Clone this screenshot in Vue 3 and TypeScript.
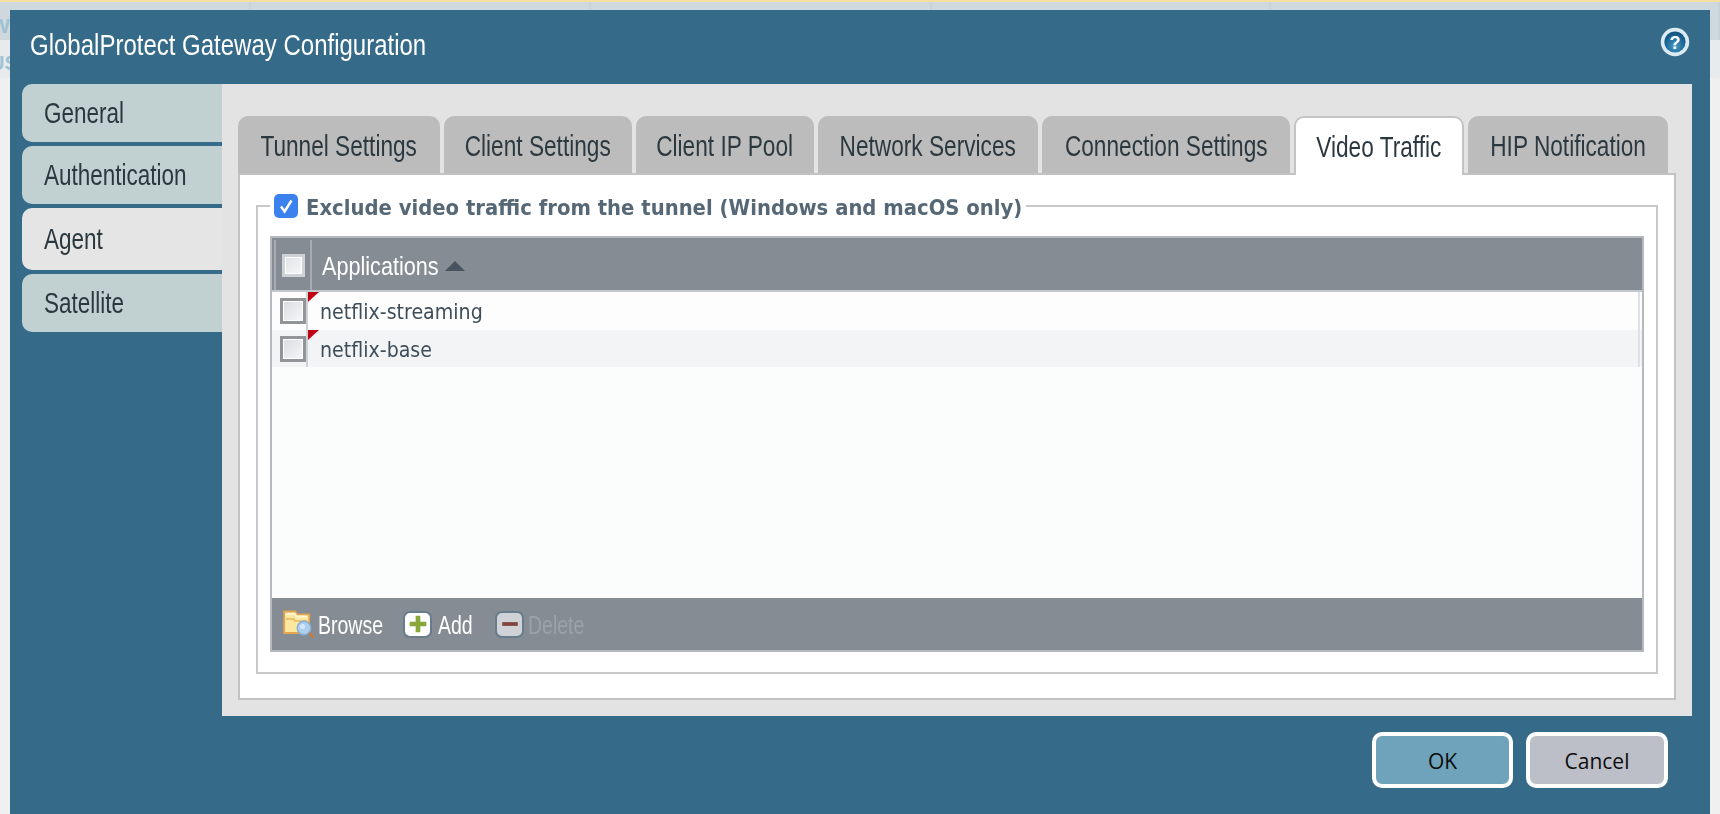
<script setup lang="ts">
const navItems = [
  { label: 'General', active: false },
  { label: 'Authentication', active: false },
  { label: 'Agent', active: true },
  { label: 'Satellite', active: false },
]
const tabs = [
  { label: 'Tunnel Settings', width: 202, active: false },
  { label: 'Client Settings', width: 188, active: false },
  { label: 'Client IP Pool', width: 178, active: false },
  { label: 'Network Services', width: 220, active: false },
  { label: 'Connection Settings', width: 248, active: false },
  { label: 'Video Traffic', width: 170, active: true },
  { label: 'HIP Notification', width: 200, active: false },
]
const rows = ['netflix-streaming', 'netflix-base']
const stripCols = [251, 340, 341, 339, 449]
</script>

<template>
  <div class="page">
    <div class="stripe"></div>
    <div class="bg-head">
      <div v-for="(w, i) in stripCols" :key="i" class="bg-col" :style="{ width: w + 'px' }">
        <span v-if="i === 0" class="frag frag-w">W</span>
      </div>
    </div>
    <div class="bg-sub"><span class="frag frag-is">US</span></div>

    <section class="dialog">
      <header class="titlebar">
        <h1 class="title"><span class="narrow">GlobalProtect Gateway Configuration</span></h1>
        <svg class="help" viewBox="0 0 30 30" width="30" height="30" aria-label="Help">
          <defs>
            <radialGradient id="helpFill" cx="50%" cy="70%" r="62%">
              <stop offset="0" stop-color="#4c9ac6" />
              <stop offset="0.65" stop-color="#1f6c9c" />
              <stop offset="1" stop-color="#125680" />
            </radialGradient>
            <filter id="helpSoft" x="-10%" y="-10%" width="120%" height="120%">
              <feGaussianBlur stdDeviation="0.7" />
            </filter>
          </defs>
          <g filter="url(#helpSoft)">
            <circle cx="15" cy="15" r="14.2" fill="#dcebf2" />
            <circle cx="15" cy="15" r="10.6" fill="url(#helpFill)" />
          </g>
          <text x="15" y="21.5" text-anchor="middle" class="help-q">?</text>
        </svg>
      </header>

      <div class="body">
        <nav class="side">
          <div v-for="item in navItems" :key="item.label" class="side-item" :class="{ on: item.active }">
            <span class="narrow">{{ item.label }}</span>
          </div>
        </nav>

        <main class="panel">
          <div class="tabs">
            <div
              v-for="t in tabs"
              :key="t.label"
              class="tab"
              :class="{ on: t.active }"
              :style="{ width: t.width + 'px' }"
            >
              <span class="narrow center">{{ t.label }}</span>
            </div>
          </div>

          <div class="box">
            <fieldset class="group">
              <legend class="legend">
                <span class="blue-check">
                  <svg viewBox="0 0 24 24" width="24" height="24">
                    <path d="M7 12.5l3.6 5L17.5 6.5" fill="none" stroke="#fff" stroke-width="2.4" />
                  </svg>
                </span>
                <span class="legend-text"><span class="squeeze">Exclude video traffic from the tunnel (Windows and macOS only)</span></span>
              </legend>

              <div class="grid">
                <div class="grid-head">
                  <div class="head-check"><span class="cb head"></span></div>
                  <div class="head-label">
                    <span class="narrow">Applications</span>
                    <span class="sort"></span>
                  </div>
                </div>

                <div class="grid-body">
                  <div v-for="r in rows" :key="r" class="row">
                    <div class="row-check"><span class="cb"></span></div>
                    <div class="row-label">
                      <span class="flag"></span>
                      <span class="squeeze cell">{{ r }}</span>
                    </div>
                  </div>
                </div>

                <div class="toolbar">
                  <div class="tool tool-browse">
                    <svg viewBox="0 0 32 28" width="32" height="28">
                      <defs>
                        <filter id="iconSoft" x="-10%" y="-10%" width="120%" height="120%">
                          <feGaussianBlur stdDeviation="0.45" />
                        </filter>
                      </defs>
                      <g filter="url(#iconSoft)">
                        <path d="M1.2 1.5h11l2 3h12v18.5H1.2z" fill="#fbe7a0" stroke="#e5a550" stroke-width="1.8" />
                        <path d="M3 4h9l1.5 2.5H24" fill="none" stroke="#fff6d4" stroke-width="1.8" />
                        <path d="M3 9h8l1 2h12" fill="none" stroke="#eab75f" stroke-width="1.6" />
                        <circle cx="21" cy="18" r="6.8" fill="#aecff0" stroke="#86aed6" stroke-width="1.4" />
                        <circle cx="19.5" cy="16.5" r="2.6" fill="#d4e6f8" />
                        <path d="M26 23l5 4.5" stroke="#c87a3c" stroke-width="2.2" />
                      </g>
                    </svg>
                    <span class="narrow">Browse</span>
                  </div>
                  <div class="tool tool-add">
                    <span class="sq">
                      <svg viewBox="0 0 18 18" width="20" height="20">
                        <path d="M9 1.5v15M1.5 9h15" stroke="#8aa83a" stroke-width="4.2" />
                      </svg>
                    </span>
                    <span class="narrow">Add</span>
                  </div>
                  <div class="tool tool-del">
                    <span class="sq off">
                      <svg viewBox="0 0 18 18" width="20" height="20">
                        <path d="M2 9h14" stroke="#83463c" stroke-width="3.4" />
                      </svg>
                    </span>
                    <span class="narrow dim">Delete</span>
                  </div>
                </div>
              </div>
            </fieldset>
          </div>
        </main>
      </div>

      <footer class="foot">
        <button class="btn ok" type="button">OK</button>
        <button class="btn cancel" type="button">Cancel</button>
      </footer>
    </section>
  </div>
</template>

<style scoped>
.page {
  position: relative;
  width: 1720px;
  height: 814px;
  overflow: hidden;
  background: #f0f0f0;
  font-family: "Liberation Sans", Arial, sans-serif;
}
.stripe { height: 2px; background: #f5dfa2; }
.bg-head { display: flex; height: 38px; background: #cfd9dd; }
.bg-col { border-right: 2px solid #c7d2da; box-sizing: border-box; overflow: hidden; }
.bg-sub { height: 38px; background: #e8ebee; overflow: hidden; }
.frag {
  display: block;
  color: #a0c2d4;
  font-weight: 700;
  font-size: 20px;
  line-height: 20px;
  white-space: nowrap;
}
.frag-w { margin: 14px 0 0 -9px; }
.frag-is { margin: 13px 0 0 -10px; }

.dialog {
  position: absolute;
  left: 10px;
  top: 10px;
  width: 1700px;
  height: 804px;
  background: #356a89;
  display: flex;
  flex-direction: column;
}
.titlebar {
  height: 74px;
  display: flex;
  justify-content: space-between;
  align-items: flex-start;
  padding: 0 20px 0 20px;
  box-sizing: border-box;
}
.title {
  margin: 10px 0 0;
  font-size: 30px;
  line-height: 50px;
  font-weight: 400;
  color: #fff;
  white-space: nowrap;
}
.narrow {
  display: inline-block;
  transform: scaleX(0.75);
  transform-origin: left center;
  white-space: nowrap;
}
.title .narrow { transform: scaleX(0.8); }
.narrow.center { transform-origin: center; }
.help { margin-top: 17px; flex: none; }
.help-q {
  font-family: "Liberation Sans", Arial, sans-serif;
  font-size: 18px;
  font-weight: 700;
  fill: #fff;
}
.body { display: flex; height: 632px; padding-left: 12px; }
.side {
  width: 200px;
  display: flex;
  flex-direction: column;
  gap: 4px;
}
.side-item {
  height: 58px;
  display: flex;
  align-items: center;
  padding-left: 22px;
  background: #c1d0d1;
  border-radius: 10px 0 0 10px;
  color: #2c3840;
  font-size: 30px;
}
.side-item.on { height: 62px; background: #e5e5e5; }
.panel {
  width: 1470px;
  background: #e3e3e3;
  padding: 32px 0 0 16px;
  box-sizing: border-box;
}
.tabs { display: flex; gap: 4px; height: 57px; }
.tab {
  height: 57px;
  display: flex;
  align-items: center;
  justify-content: center;
  padding-top: 2px;
  background: #bcbcbc;
  border-radius: 10px 10px 0 0;
  color: #2c3840;
  font-size: 30px;
  box-sizing: border-box;
}
.tab .narrow { transform: scaleX(0.755); }
.tab.on {
  position: relative;
  height: 59px;
  padding-top: 0;
  background: #fff;
  border: 2px solid #c3c3c3;
  border-bottom: none;
  z-index: 1;
}
.box {
  width: 1438px;
  height: 527px;
  background: #fff;
  border: 2px solid #c2c2c2;
  padding: 19px 16px 0;
  box-sizing: border-box;
}
.group {
  margin: 0;
  padding: 0 12px 20px;
  border: 2px solid #c8c8c8;
  min-width: 0;
}
.legend {
  padding: 0 4px;
  height: 24px;
  display: flex;
  align-items: center;
}
.blue-check {
  width: 24px;
  height: 24px;
  background: #3b82ee;
  border-radius: 5px;
  flex: none;
}
.blue-check svg { display: block; }
.legend-text {
  margin-left: 8px;
  width: 716px;
  height: 24px;
  line-height: 28px;
  font-family: "DejaVu Sans", Verdana, sans-serif;
  font-weight: 700;
  font-size: 22px;
  color: #566876;
}
.squeeze {
  display: inline-block;
  white-space: nowrap;
  transform: scaleX(0.893);
  transform-origin: left center;
}
.grid {
  margin-top: 18px;
  height: 416px;
  border: 2px solid #b5bac1;
  box-sizing: border-box;
  display: flex;
  flex-direction: column;
  background: #fbfdfd;
}
.grid-head {
  height: 54px;
  background: #858c94;
  border-bottom: 2px solid #c3c8cf;
  display: flex;
  box-sizing: border-box;
  padding: 2px 0 0;
  flex: none;
}
.head-check {
  margin-left: 2px;
  width: 34px;
  border-left: 2px solid #a6acb3;
  border-right: 2px solid #a6acb3;
  box-sizing: content-box;
  display: flex;
  align-items: center;
  justify-content: center;
  height: 50px;
}
.head-label {
  display: flex;
  align-items: center;
  padding-left: 10px;
  color: #fff;
  font-size: 25px;
  height: 46px;
  margin-top: 3px;
}
.head-label .narrow { width: 123px; transform: scaleX(0.865); }
.sort {
  width: 0;
  height: 0;
  border-left: 10px solid transparent;
  border-right: 10px solid transparent;
  border-bottom: 10px solid #47545f;
}
.cb {
  display: block;
  width: 26px;
  height: 26px;
  box-sizing: border-box;
  border: 3px solid #929598;
  background: linear-gradient(135deg, #d9dce4, #f7f7f8);
  box-shadow: inset 0 0 0 1px #fff;
}
.cb.head {
  width: 23px;
  height: 23px;
  border: 3px solid #cfd2d6;
  background: linear-gradient(135deg, #dfe2e6, #f8f8f8);
}
.grid-body { flex: 1; display: flex; flex-direction: column; }
.row { height: 38px; display: flex; flex: none; background: #fdfdfd; }
.row + .row { height: 37px; background: #f3f4f6; }
.row-check {
  flex: none;
  border-right: 2px solid #cdd2d6;
  display: flex;
  align-items: center;
  padding-left: 8px;
  box-sizing: content-box;
  width: 26px;
}
.row-label {
  flex: 1;
  position: relative;
  display: flex;
  align-items: center;
  padding-left: 12px;
  margin-right: 2px;
  border-right: 2px solid #dfe2e5;
  font-family: "DejaVu Sans", Verdana, sans-serif;
  font-size: 22px;
  line-height: 30px;
  color: #3f4d58;
}
.squeeze.cell { transform: scaleX(0.865); margin-top: 2px; }
.flag {
  position: absolute;
  left: 0;
  top: 0;
  width: 0;
  height: 0;
  border-top: 10px solid #c00012;
  border-right: 11px solid transparent;
}
.toolbar {
  height: 52px;
  flex: none;
  background: #858c94;
  display: flex;
  align-items: center;
  color: #fff;
  font-size: 25px;
}
.tool { display: flex; align-items: center; }
.tool-browse { margin-left: 11px; width: 120px; gap: 3px; }
.tool-add { width: 92px; gap: 6px; }
.tool-del { gap: 4px; }
.tool .narrow { transform: scaleX(0.78); width: 36px; margin-top: 3px; }
.tool svg { display: block; flex: none; }
.sq {
  width: 29px;
  height: 27px;
  box-sizing: border-box;
  border: 2px solid #687c8c;
  border-radius: 7px;
  background: #fff;
  display: flex;
  align-items: center;
  justify-content: center;
  flex: none;
}
.sq.off { background: #cfd2d6; }
.dim { color: #9aa2a9; }
.foot {
  flex: 1;
  display: flex;
  justify-content: flex-end;
  gap: 13px;
  padding: 16px 42px 0 0;
  box-sizing: border-box;
}
.btn {
  width: 142px;
  height: 56px;
  border: 4px solid #fff;
  border-radius: 10px;
  font-family: "Open Sans", "Noto Sans", sans-serif;
  font-size: 21px;
  color: #0c0c0c;
  padding: 2px 0 0;
}
.ok { width: 141px; background: #6fa3bb; }
.cancel { background: #bcbfc8; }
</style>

<style>
html, body { margin: 0; background: #f0f0f0; overflow: hidden; }
</style>
